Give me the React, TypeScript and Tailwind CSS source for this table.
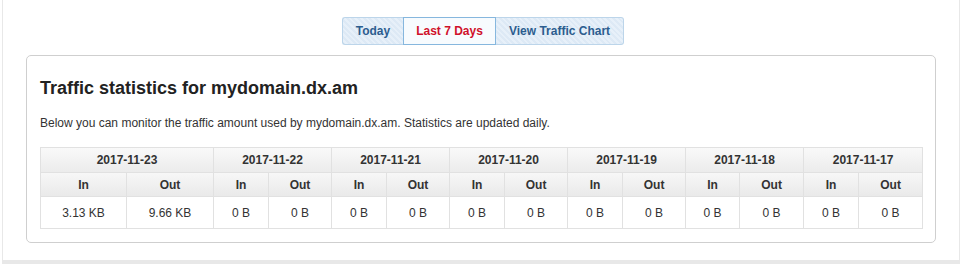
import React from "react";

const days = [
  { date: "2017-11-23", inn: "3.13 KB", out: "9.66 KB" },
  { date: "2017-11-22", inn: "0 B", out: "0 B" },
  { date: "2017-11-21", inn: "0 B", out: "0 B" },
  { date: "2017-11-20", inn: "0 B", out: "0 B" },
  { date: "2017-11-19", inn: "0 B", out: "0 B" },
  { date: "2017-11-18", inn: "0 B", out: "0 B" },
  { date: "2017-11-17", inn: "0 B", out: "0 B" },
];

const colWidths = [86, 87, 55, 63, 55, 63, 55, 63, 55, 63, 54, 64, 55, 64];

const stripe =
  "bg-[repeating-linear-gradient(45deg,#dde9f5_0px,#dde9f5_2px,#e7f0f9_2px,#e7f0f9_4px)]";

export default function App() {
  return (
    <div className="w-[962px] h-[264px] bg-white px-[2px] font-['Liberation_Sans',Arial,sans-serif] text-[#333]">
      <div className="h-[264px] border-x border-b-4 border-[#e8e8e8] px-[23px] pt-[17px]">
        <div className="flex justify-center pl-[4px]">
          <div className="flex h-[28px] text-[12px] font-bold">
            <button
              className={`w-[61px] rounded-l-[3px] border border-r-0 border-[#bcd5ea] text-[#2c5d8f] ${stripe}`}
            >
              Today
            </button>
            <button className="w-[93px] border border-[#86b7de] bg-[#f7fbfe] text-[#d0112b]">
              Last 7 Days
            </button>
            <button
              className={`w-[128px] rounded-r-[3px] border border-l-0 border-[#bcd5ea] text-[#2c5d8f] ${stripe}`}
            >
              View Traffic Chart
            </button>
          </div>
        </div>

        <div className="mt-[10px] h-[188px] rounded-[5px] border border-[#cfcfcf] pl-[13px] pr-[14px] pt-[22px]">
          <h2 className="text-[18px] leading-[20px] font-bold text-[#222]">
            Traffic statistics for mydomain.dx.am
          </h2>
          <p className="mt-[17px] text-[12px] leading-[16px]">
            Below you can monitor the traffic amount used by mydomain.dx.am.
            Statistics are updated daily.
          </p>

          <table className="mt-[16px] w-[882px] table-fixed border-collapse text-[12px] text-center">
            <colgroup>
              {colWidths.map((w, i) => (
                <col key={i} style={{ width: w }} />
              ))}
            </colgroup>
            <thead>
              <tr className="h-[25px] bg-[linear-gradient(#f9f9f9,#ebebeb)]">
                {days.map((d) => (
                  <th
                    key={d.date}
                    colSpan={2}
                    className="border border-[#e1e1e1] font-bold text-[#333]"
                  >
                    {d.date}
                  </th>
                ))}
              </tr>
              <tr className="h-[24px] bg-[linear-gradient(#f7f7f7,#e9e9e9)]">
                {days.map((d) => (
                  <React.Fragment key={d.date}>
                    <th className="border border-[#e1e1e1] font-bold">In</th>
                    <th className="border border-[#e1e1e1] font-bold">Out</th>
                  </React.Fragment>
                ))}
              </tr>
            </thead>
            <tbody>
              <tr className="h-[32px] bg-white">
                {days.map((d) => (
                  <React.Fragment key={d.date}>
                    <td className="border border-[#e1e1e1]">{d.inn}</td>
                    <td className="border border-[#e1e1e1]">{d.out}</td>
                  </React.Fragment>
                ))}
              </tr>
            </tbody>
          </table>
        </div>
      </div>
    </div>
  );
}
